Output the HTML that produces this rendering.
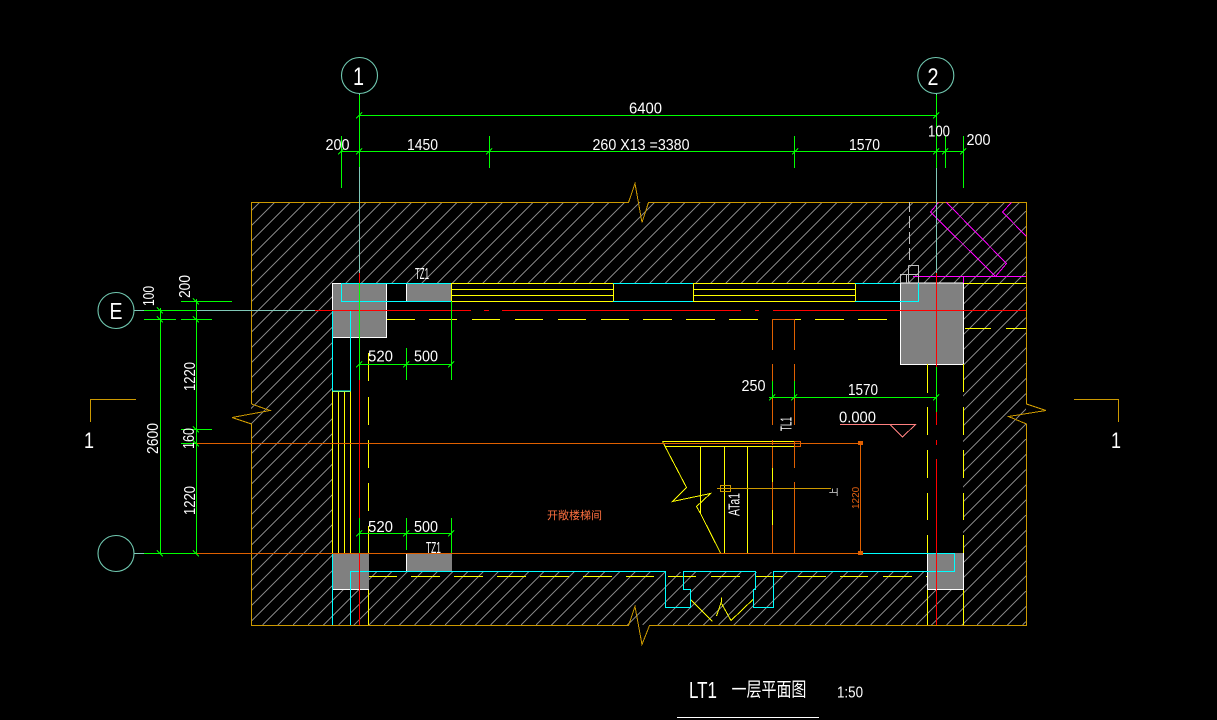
<!DOCTYPE html>
<html><head><meta charset="utf-8"><style>
html,body{margin:0;padding:0;background:#000;width:1217px;height:720px;overflow:hidden}
svg{display:block;position:absolute;left:0;top:0}
text{font-family:"Liberation Sans","Noto Sans CJK SC",sans-serif;fill:#fff;font-size:16px}
.l{fill:none;shape-rendering:crispEdges;stroke-width:1}
</style></head><body>
<svg width="1217" height="720" viewBox="0 0 1217 720">
<rect width="1217" height="720" fill="#000"/>
<defs><clipPath id="h"><path clip-rule="evenodd" d="M251 202H1026V625H251ZM332 283H963V572H332Z"/></clipPath></defs>
<path class="l" stroke="#808080" clip-path="url(#h)" d="M260 202l-9 9M275.2 202l-24.2 24.2M290.4 202l-39.4 39.4M305.6 202l-54.6 54.6M320.8 202l-69.8 69.8M336 202l-85 85M351.2 202l-100.2 100.2M366.4 202l-115.4 115.4M381.6 202l-130.6 130.6M396.8 202l-145.8 145.8M412 202l-161 161M427.2 202l-176.2 176.2M442.4 202l-191.4 191.4M457.6 202l-206.6 206.6M472.8 202l-221.8 221.8M488 202l-237 237M503.2 202l-252.2 252.2M518.4 202l-267.4 267.4M533.6 202l-282.6 282.6M548.8 202l-297.8 297.8M564 202l-313 313M579.2 202l-328.2 328.2M594.4 202l-343.4 343.4M609.6 202l-358.6 358.6M624.8 202l-373.8 373.8M640 202l-389 389M655.2 202l-404.2 404.2M670.4 202l-419.4 419.4
M685.6 202l-423 423M700.8 202l-423 423M716 202l-423 423M731.2 202l-423 423M746.4 202l-423 423M761.6 202l-423 423M776.8 202l-423 423M792 202l-423 423M807.2 202l-423 423M822.4 202l-423 423M837.6 202l-423 423M852.8 202l-423 423M868 202l-423 423M883.2 202l-423 423M898.4 202l-423 423M913.6 202l-423 423M928.8 202l-423 423M944 202l-423 423M959.2 202l-423 423M974.4 202l-423 423M989.6 202l-423 423M1004.8 202l-423 423M1020 202l-423 423
M1026 211.2l-413.8 413.8M1026 226.4l-398.6 398.6M1026 241.6l-383.4 383.4M1026 256.8l-368.2 368.2M1026 272l-353 353M1026 287.2l-337.8 337.8M1026 302.4l-322.6 322.6M1026 317.6l-307.4 307.4M1026 332.8l-292.2 292.2M1026 348l-277 277M1026 363.2l-261.8 261.8M1026 378.4l-246.6 246.6M1026 393.6l-231.4 231.4M1026 408.8l-216.2 216.2M1026 424l-201 201M1026 439.2l-185.8 185.8M1026 454.4l-170.6 170.6M1026 469.6l-155.4 155.4M1026 484.8l-140.2 140.2M1026 500l-125 125M1026 515.2l-109.8 109.8M1026 530.4l-94.6 94.6M1026 545.6l-79.4 79.4M1026 560.8l-64.2 64.2M1026 576l-49 49M1026 591.2l-33.8 33.8M1026 606.4l-18.6 18.6M1026 621.6l-3.4 3.4"/>

<!-- outer boundary -->
<path class="l" stroke="#cc9900" d="M251.5 404V202.5H628.5L635 183.5L642 222.5L648.5 202.5H1026.5V404L1046 410.5L1008.5 416.5L1026.5 424V625.5H649.5L642 644.5L635 606.5L628.5 625.5H251.5V424L232 417.5L270 410.5L251.5 404M90.5 422V399.5H136M1074 399.5H1118.5V422"/>

<!-- gray columns -->
<g shape-rendering="crispEdges" fill="#808080">
<rect x="332" y="283" width="55" height="54"/>
<rect x="407" y="283" width="45" height="18"/>
<rect x="900" y="283" width="63" height="81"/>
<rect x="332" y="553" width="37" height="37"/>
<rect x="407" y="553" width="45" height="18"/>
<rect x="927" y="553" width="36" height="37"/>
</g>
<path class="l" stroke="#fff" d="M332.5 337.5V283.5H341M386.5 283V337.5H332M406.5 283V301M406.5 553V571M332 589.5H369M900.5 283V364.5H963.5V283H900M927.5 553V589.5H963.5V553"/>

<!-- yellow -->
<path class="l" stroke="#ffff00" d="M451.5 283.5H613.5V301.5H451.5ZM451.5 289.5H613.5M451.5 295.5H613.5M693.5 283.5H855.5V301.5H693.5ZM693.5 289.5H855.5M693.5 295.5H855.5
M332.5 553V391.5H350.5V553M338.5 391V553M344.5 391V553
M387 319.5H415M429 319.5H457M472 319.5H500M515 319.5H543M558 319.5H586M601 319.5H629M643 319.5H672M686 319.5H715M729 319.5H758M794 319.5H801M815 319.5H844M858 319.5H887
M964 283.5H1026M965 328.5H991M1006 328.5H1026
M369 576.5H397M411 576.5H440M454 576.5H483M497 576.5H526M540 576.5H569M583 576.5H612M626 576.5H654M668 576.5H696M711 576.5H740M755 576.5H783M798 576.5H826M840 576.5H868M883 576.5H912M926 576.5H927
M368.5 353V381M368.5 397V425M368.5 440V468M368.5 483V511M368.5 526V553M368.5 590V625
M927.5 364V393M927.5 407V435M927.5 450V478M927.5 493V520M927.5 535V553M927.5 590V625
M963.5 364V392M963.5 407V435M963.5 450V478M963.5 493V520M963.5 535V553M963.5 590V625
M662.5 441.5H794M665.5 446.5H794M662.5 441.5L686.5 487.5L672.5 501.5L710.5 493.5L696.5 506.5L700.5 513.5L720.5 553
M700.5 446V513M724.5 446V553M747.5 446V553M772.5 446V553
M690.5 599.5L712.5 621.5M716.5 616L721.5 601.5V597.5M721.5 603.5L731 620.5L753.5 599"/>

<!-- cyan -->
<path class="l" stroke="#00ffff" d="M341.5 283.5H451M613 283.5H693M855 283.5H900M341.5 283.5V301.5H451M613 301.5H693M855 301.5H918.5V283M332.5 310.5H350.5V391H332.5Z
M332.5 553V625M350.5 571V625M350.5 571.5H665.5V607.5H690.5V589.5H683.5V571.5H755.5V589.5H753.5V607.5H773.5V571.5H954.5V553M862 553.5H954"/>

<!-- magenta -->
<path class="l" stroke="#ff00ff" d="M913 276.5H1026M938.5 202.5L930.5 212L995.5 276.5L1006.5 263.5L946.5 202.5M1011.5 202.5L1002.5 212L1026.5 236.5M963.5 276V283"/>

<!-- gray small -->
<path class="l" stroke="#c0c0c0" d="M909.5 202V212M909.5 216V228M909.5 232V244M909.5 248V260M908.5 265.5H918.5V283M908.5 265.5V283M900.5 283V274.5H918M906.5 274.5V283"/>

<!-- orange-red -->
<path class="l" stroke="#e06000" d="M196 443.5H860M196 553.5H862M860.5 443V553M794.5 441.5H800.5V446.5H794.5
M772.5 319V350M772.5 364V381M772.5 397V425M772.5 440V445M772.5 447V468M772.5 482V510M772.5 525V553
M794.5 319V350M794.5 364V381M794.5 397V425M794.5 441V468M794.5 482V553M772 319.5H794"/>
<path d="M858 441h5v4h-5zM858 551h5v4h-5z" fill="#e06000"/>
<path class="l" stroke="#cc9900" d="M717 488.5H831M720.5 485.5H730.5V491.5H720.5Z"/>

<!-- red -->
<path class="l" stroke="#ff0000" d="M315 310.5H471M484 310.5H489M502 310.5H741M755 310.5H759M773 310.5H1026M359.5 273V283M359.5 380V518M359.5 553V625M936.5 273V367M936.5 412V425M936.5 440V445M936.5 459V625"/>

<!-- teal -->
<path class="l" stroke="#80c8b8" d="M134 310.5H315M134 553.5H144M359.5 93V273M936.5 93V273"/>
<g fill="none" stroke="#70c8b0" stroke-width="1.1">
<circle cx="359.5" cy="75.5" r="18"/><circle cx="935.8" cy="75.5" r="18"/><circle cx="116" cy="310.5" r="18"/><circle cx="116" cy="553.5" r="18"/>
</g>

<!-- green -->
<path class="l" stroke="#00ff00" stroke-width="1" d="M359 115.5H936M341 151.5H964M341.5 136V188M489.5 136V168M794.5 136V168M945.5 136V168M963.5 136V188M359.5 95V167M936.5 95V168M359.5 283V380M359.5 518V553
M144 310.5H196M181 301.5H232M144 319.5H176M181 319.5H212M160.5 308V553M196.5 299V553M181 429.5H212M181 443.5H196M144 553.5H196
M359 364.5H452M359 533.5H452M406.5 348V380M406.5 518V550M451.5 301V380M451.5 518V553M769 397.5H937M772.5 381V397M794.5 381V397M936.5 367V412
M356 118.5L362 112.5M933 118.5L939 112.5M338 154.5L344 148.5M356 154.5L362 148.5M486 154.5L492 148.5M792 154.5L798 148.5M933 154.5L939 148.5M942 154.5L948 148.5M960 154.5L966 148.5
M157 307.5L163 313.5M157 316.5L163 322.5M193 298.5L199 304.5M193 316.5L199 322.5M193 426.5L199 432.5M193 440.5L199 446.5M157 550.5L163 556.5M193 550.5L199 556.5
M356 367.5L362 361.5M403 367.5L409 361.5M448 367.5L454 361.5M356 536.5L362 530.5M403 536.5L409 530.5M448 536.5L454 530.5M769 400.5L775 394.5M791 400.5L797 394.5M933 400.5L939 394.5"/>

<!-- pink elevation -->
<path class="l" stroke="#ff8080" d="M840 424.5H915.5L902.5 437L890 424.5"/>
<!-- white rule -->
<path class="l" stroke="#fff" d="M677 717.5H819"/>

<!-- text -->
<text x="629" y="113.5" textLength="33" lengthAdjust="spacingAndGlyphs">6400</text>
<text x="325.5" y="150" textLength="24" lengthAdjust="spacingAndGlyphs">200</text>
<text x="407" y="150" textLength="31" lengthAdjust="spacingAndGlyphs">1450</text>
<text x="592.5" y="150" textLength="97" lengthAdjust="spacingAndGlyphs">260 X13 =3380</text>
<text x="849" y="150" textLength="31" lengthAdjust="spacingAndGlyphs">1570</text>
<text x="928" y="136.5" textLength="22" lengthAdjust="spacingAndGlyphs">100</text>
<text x="966.5" y="145" textLength="24" lengthAdjust="spacingAndGlyphs">200</text>
<text x="353" y="85" textLength="11" lengthAdjust="spacingAndGlyphs" style="font-size:25px">1</text>
<text x="927.5" y="85" textLength="11" lengthAdjust="spacingAndGlyphs" style="font-size:24px">2</text>
<text x="109.5" y="319" textLength="13" lengthAdjust="spacingAndGlyphs" style="font-size:23.5px">E</text>
<text x="368" y="361.5" textLength="25" lengthAdjust="spacingAndGlyphs">520</text>
<text x="414" y="361.5" textLength="24" lengthAdjust="spacingAndGlyphs">500</text>
<text x="368" y="532" textLength="25" lengthAdjust="spacingAndGlyphs">520</text>
<text x="414" y="532" textLength="24" lengthAdjust="spacingAndGlyphs">500</text>
<text x="415" y="279" textLength="14" lengthAdjust="spacingAndGlyphs">TZ1</text>
<text x="426" y="553" textLength="15" lengthAdjust="spacingAndGlyphs">TZ1</text>
<text x="741.5" y="391" textLength="24" lengthAdjust="spacingAndGlyphs">250</text>
<text x="848" y="395" textLength="30" lengthAdjust="spacingAndGlyphs">1570</text>
<text x="839" y="422.5" textLength="37" lengthAdjust="spacingAndGlyphs">0.000</text>
<text transform="translate(154 306) rotate(-90)" textLength="20" lengthAdjust="spacingAndGlyphs">100</text>
<text transform="translate(190 298) rotate(-90)" textLength="23" lengthAdjust="spacingAndGlyphs">200</text>
<text transform="translate(195 391) rotate(-90)" textLength="29" lengthAdjust="spacingAndGlyphs">1220</text>
<text transform="translate(194 449) rotate(-90)" textLength="21" lengthAdjust="spacingAndGlyphs">160</text>
<text transform="translate(195 515) rotate(-90)" textLength="29" lengthAdjust="spacingAndGlyphs">1220</text>
<text transform="translate(158 454) rotate(-90)" textLength="31" lengthAdjust="spacingAndGlyphs">2600</text>
<text transform="translate(791.5 431) rotate(-90)" textLength="14" lengthAdjust="spacingAndGlyphs">TL1</text>
<text transform="translate(739.5 516) rotate(-90)" textLength="23" lengthAdjust="spacingAndGlyphs">ATa1</text>
<text transform="translate(837 496.5) rotate(-90)" style="font-size:9px">上</text>
<text transform="translate(859 509) rotate(-90)" style="font-size:10px;fill:#e06010">1220</text>
<text x="547" y="519" style="font-size:11px;fill:#ff7040">开敞楼梯间</text>
<text x="84" y="448" textLength="10" lengthAdjust="spacingAndGlyphs" style="font-size:22px">1</text>
<text x="1111" y="448" textLength="10" lengthAdjust="spacingAndGlyphs" style="font-size:22px">1</text>
<text x="689" y="698" style="font-size:23px" textLength="28" lengthAdjust="spacingAndGlyphs">LT1</text>
<text transform="translate(731.5 696) scale(1 1.3)" style="font-size:15px">一层平面图</text>
<text x="837" y="697.5" textLength="26" lengthAdjust="spacingAndGlyphs">1:50</text>
</svg>
</body></html>
